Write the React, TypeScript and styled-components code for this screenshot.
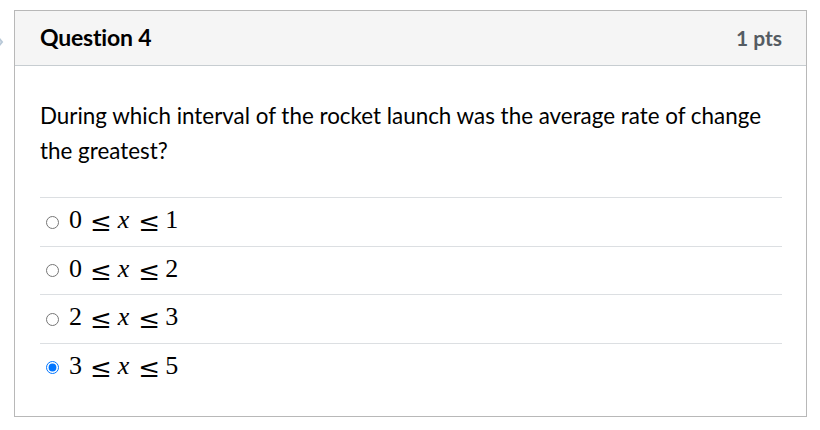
import React from "react";
import styled, { createGlobalStyle } from "styled-components";

const Global = createGlobalStyle`
  html, body { margin: 0; padding: 0; background: #fff; }
  body { font-family: Lato, "Noto Sans", sans-serif; color: #2d3b45; }
`;

const Page = styled.div`
  display: flex;
  padding-top: 10px;
`;

const Gutter = styled.div`
  width: 14px;
  display: flex;
  align-items: flex-start;
  padding-top: 25px;
  overflow: hidden;
`;

const Card = styled.div`
  width: 793px;
  height: 407px;
  box-sizing: border-box;
  border: 1px solid #b8b8b8;
  display: flex;
  flex-direction: column;
`;

const Header = styled.div`
  height: 55px;
  box-sizing: border-box;
  background: #f5f5f5;
  border-bottom: 1px solid #c7cdd1;
  display: flex;
  align-items: center;
  justify-content: space-between;
  padding: 0 24px 2px 25px;
`;

const Title = styled.div`
  font-size: 23px;
  font-weight: 700;
  color: #000;
  letter-spacing: -0.2px;
`;

const Points = styled.div`
  font-size: 21px;
  font-weight: 700;
  color: #555c63;
`;

const Body = styled.div`
  padding: 32px 24px 0 25px;
`;

const Prompt = styled.p`
  margin: 0 0 29px 0;
  font-size: 22.4px;
  line-height: 35px;
  color: #000;
`;

const Options = styled.div`
  display: flex;
  flex-direction: column;
`;

const Option = styled.label`
  height: 48.5px;
  box-sizing: border-box;
  border-top: 1px solid #dcdfe2;
  display: flex;
  align-items: center;
  padding-bottom: 3px;
`;

const Radio = styled.input`
  width: 13px;
  height: 13px;
  margin: 4px 10px 0 6px;
  accent-color: #0075ff;
`;

const Math = styled.span`
  font-family: "Liberation Serif", "DejaVu Serif", serif;
  font-size: 26px;
  color: #000;
  display: flex;
  align-items: baseline;
`;

const Rel = styled.span<{ $l?: number; $r?: number }>`
  font-family: "DejaVu Serif", serif;
  font-size: 26px;
  line-height: 1;
  margin: 0 ${(p) => p.$r ?? 6}px 0 ${(p) => p.$l ?? 8}px;
  transform: translateY(3px);
`;

const Var = styled.span`
  font-style: italic;
  margin-right: 1px;
`;

const Chevron = () => (
  <svg width="8" height="14" viewBox="0 0 8 14" style={{ marginLeft: -4 }}>
    <path d="M1 1 L6 7 L1 13" fill="none" stroke="#b9c9d8" strokeWidth="2" />
  </svg>
);

const options = [
  ["0", "1"],
  ["0", "2"],
  ["2", "3"],
  ["3", "5"],
];

export default function App() {
  return (
    <>
      <Global />
      <Page>
        <Gutter>
          <Chevron />
        </Gutter>
        <Card>
          <Header>
            <Title>Question 4</Title>
            <Points>1 pts</Points>
          </Header>
          <Body>
            <Prompt>
              During which interval of the rocket launch was the average rate of change the greatest?
            </Prompt>
            <Options>
              {options.map(([a, b], i) => (
                <Option key={i}>
                  <Radio type="radio" name="q4" defaultChecked={i === 3} />
                  <Math>
                    <span>{a}</span>
                    <Rel>≤</Rel>
                    <Var>x</Var>
                    <Rel $r={5}>≤</Rel>
                    <span>{b}</span>
                  </Math>
                </Option>
              ))}
            </Options>
          </Body>
        </Card>
      </Page>
    </>
  );
}
